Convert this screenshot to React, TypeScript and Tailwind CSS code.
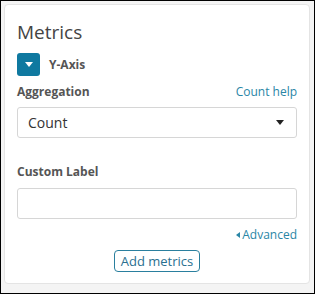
export default function App() {
  return (
    <div className="w-[315px] h-[294px] border border-black bg-[#f4f4f4] font-['Open_Sans',sans-serif] text-[#444]">
      <div className="ml-[3px] mt-[3px] w-[306px] h-[280px] bg-white border border-[#e4e4e4] rounded-sm px-3 pt-[15px]">
        <h2 className="text-[19px] leading-6 text-[#444]">Metrics</h2>
        <div className="mt-[9px] flex items-center gap-[9px]">
          <button className="w-[23px] h-[23px] rounded-[3px] bg-[#0f79a0] flex items-center justify-center">
            <svg width="8" height="5" viewBox="0 0 8 5"><path d="M0 0h8L4 5z" fill="#fff" /></svg>
          </button>
          <span className="text-[12px] font-bold text-[#555]">Y-Axis</span>
        </div>
        <div className="mt-[7px] flex items-end justify-between">
          <span className="text-[12px] font-bold text-[#555]">Aggregation</span>
          <span className="text-[12px] text-[#2a86a6]">Count help</span>
        </div>
        <div className="mt-[6px] h-[31px] border border-[#d6d6d6] rounded-[3px] flex items-center justify-between pl-[10px] pr-[12px]">
          <span className="text-[14px] text-[#333]">Count</span>
          <svg width="8" height="5" viewBox="0 0 8 5"><path d="M0 0h8L4 5z" fill="#222" /></svg>
        </div>
        <div className="mt-[25px] text-[12px] font-bold text-[#555]">Custom Label</div>
        <div className="mt-[7px] h-[31px] border border-[#d6d6d6] rounded-[3px]"></div>
        <div className="mt-[7px] flex justify-end items-center gap-[2px] text-[12px] text-[#2a86a6]">
          <svg width="4" height="6" viewBox="0 0 4 6"><path d="M4 0v6L0 3z" fill="#2a86a6" /></svg>
          <span>Advanced</span>
        </div>
        <div className="mt-[6px] flex justify-center">
          <button className="h-[22px] px-[6px] border border-[#2a7f9e] rounded-[4px] text-[13px] text-[#2a7090] leading-none">Add metrics</button>
        </div>
      </div>
    </div>
  );
}
